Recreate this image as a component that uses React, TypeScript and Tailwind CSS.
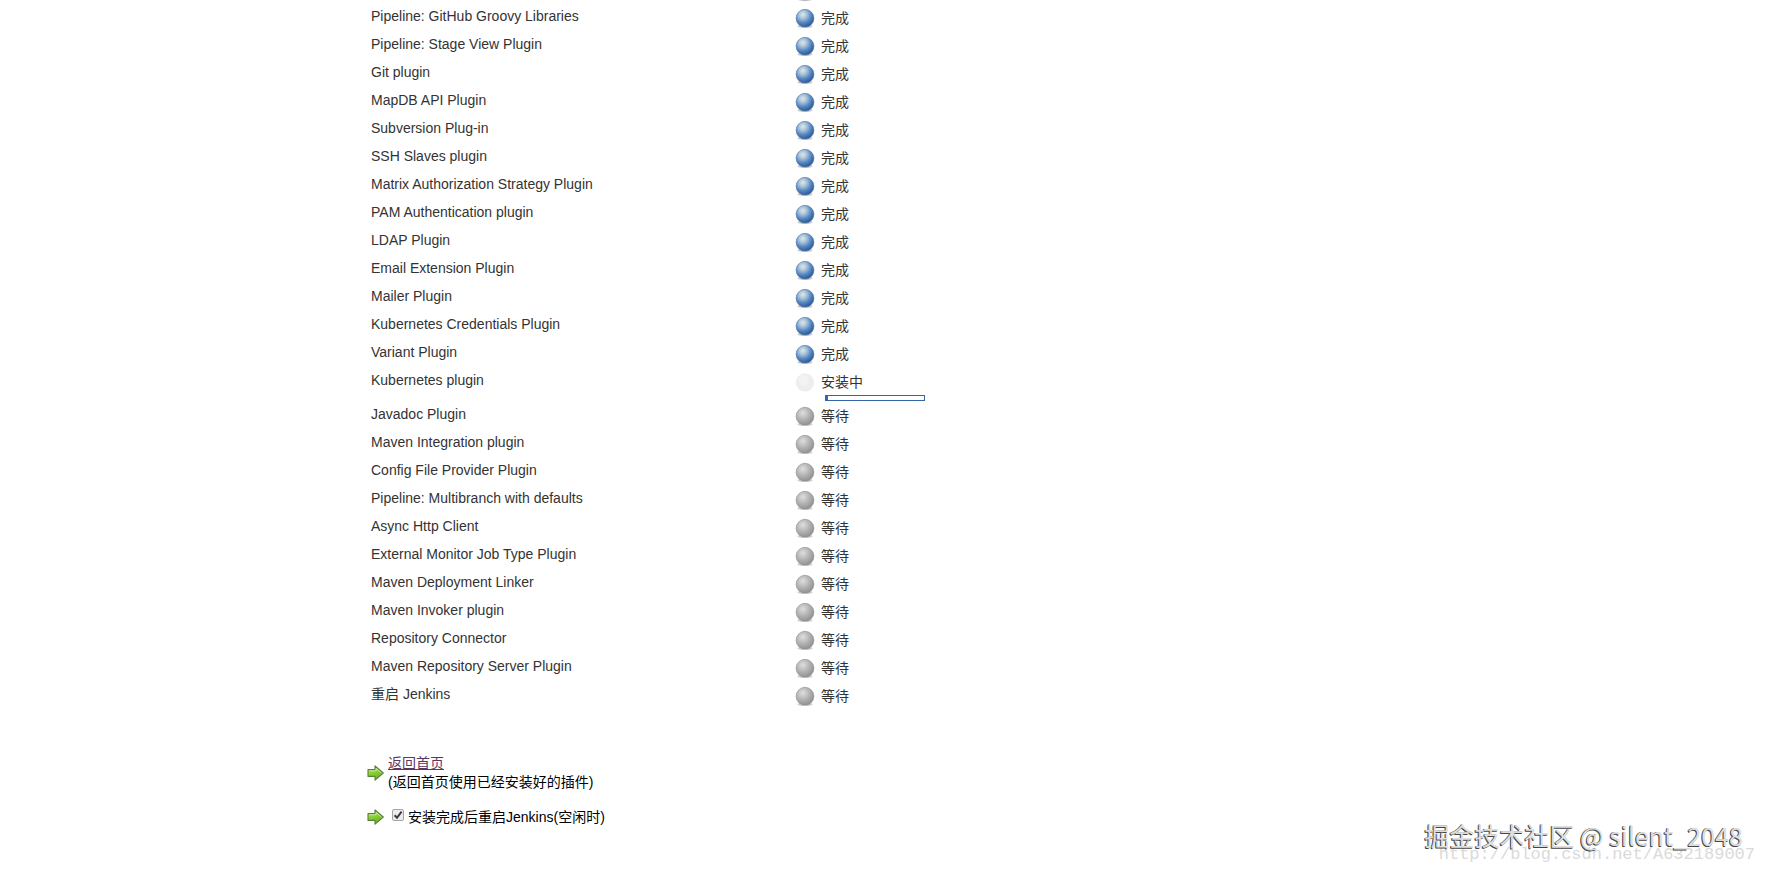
type State = "done" | "installing" | "pending";

const labels: Record<State, string> = {
  done: "完成",
  installing: "安装中",
  pending: "等待",
};

const plugins: [string, State][] = [
  ["Pipeline: GitHub Groovy Libraries", "done"],
  ["Pipeline: Stage View Plugin", "done"],
  ["Git plugin", "done"],
  ["MapDB API Plugin", "done"],
  ["Subversion Plug-in", "done"],
  ["SSH Slaves plugin", "done"],
  ["Matrix Authorization Strategy Plugin", "done"],
  ["PAM Authentication plugin", "done"],
  ["LDAP Plugin", "done"],
  ["Email Extension Plugin", "done"],
  ["Mailer Plugin", "done"],
  ["Kubernetes Credentials Plugin", "done"],
  ["Variant Plugin", "done"],
  ["Kubernetes plugin", "installing"],
  ["Javadoc Plugin", "pending"],
  ["Maven Integration plugin", "pending"],
  ["Config File Provider Plugin", "pending"],
  ["Pipeline: Multibranch with defaults", "pending"],
  ["Async Http Client", "pending"],
  ["External Monitor Job Type Plugin", "pending"],
  ["Maven Deployment Linker", "pending"],
  ["Maven Invoker plugin", "pending"],
  ["Repository Connector", "pending"],
  ["Maven Repository Server Plugin", "pending"],
  ["重启 Jenkins", "pending"],
];

function Gradients() {
  return (
    <svg width="0" height="0" className="absolute" aria-hidden="true">
      <defs>
        <radialGradient id="ball-done" cx="0.38" cy="0.3" r="0.72">
          <stop offset="0" stopColor="#dfe9e6" />
          <stop offset="0.3" stopColor="#a9c3da" />
          <stop offset="0.65" stopColor="#5386c0" />
          <stop offset="1" stopColor="#2a5695" />
        </radialGradient>
        <radialGradient id="ball-pending" cx="0.38" cy="0.32" r="0.72">
          <stop offset="0" stopColor="#dedede" />
          <stop offset="0.45" stopColor="#b9b9b9" />
          <stop offset="1" stopColor="#8e8e8e" />
        </radialGradient>
        <linearGradient id="arrow-fill" x1="0" y1="0" x2="0.4" y2="1">
          <stop offset="0" stopColor="#c0e88f" />
          <stop offset="0.5" stopColor="#8bd236" />
          <stop offset="1" stopColor="#69b518" />
        </linearGradient>
      </defs>
    </svg>
  );
}

function Ball({ state }: { state: State }) {
  if (state === "installing") {
    return (
      <svg width="20" height="20" viewBox="0 0 20 20" aria-hidden="true">
        <circle cx="10" cy="10.4" r="9.2" fill="#eeeeee" />
        <circle cx="8.5" cy="8.5" r="5" fill="#f3f3f3" />
      </svg>
    );
  }
  const done = state === "done";
  return (
    <svg width="20" height="20" viewBox="0 0 20 20" aria-hidden="true">
      <ellipse cx="10" cy="18.2" rx="7.5" ry="1.8" fill="#8a8a8a" opacity="0.45" />
      <circle
        cx="10"
        cy="10.2"
        r="8.9"
        fill={done ? "url(#ball-done)" : "url(#ball-pending)"}
        stroke={done ? "#4a6fa3" : "#8c8c8c"}
        strokeWidth="0.6"
      />
    </svg>
  );
}

function Arrow() {
  return (
    <svg width="17" height="16" viewBox="0 0 17 16" className="shrink-0" aria-hidden="true">
      <path
        d="M1 4.6H8V0.8L16.3 8L8 15.2V11.4H1Z"
        fill="url(#arrow-fill)"
        stroke="#5c7f3a"
        strokeWidth="1.1"
        strokeLinejoin="round"
      />
      <path d="M2.1 5.8H9.1V3.4L14.4 8" fill="none" stroke="#d0efaa" strokeWidth="0.8" />
    </svg>
  );
}

export default function App() {
  return (
    <div className="relative min-h-screen overflow-hidden bg-white font-['Liberation_Sans','Noto_Sans_CJK_SC',sans-serif] text-sm leading-5 text-black">
      <Gradients />
      <main className="pl-[367px]">
        <table className="border-collapse text-[#333333]">
          <tbody>
            <tr>
              <td />
              <td className="p-0 pl-1">
                <div className="flex h-[3px] items-end overflow-hidden pb-[2px]">
                  <div className="h-5">
                    <Ball state="pending" />
                  </div>
                </div>
              </td>
            </tr>
            {plugins.map(([name, state]) => (
              <tr key={name} className="h-7 align-top">
                <td className="w-[424px] py-[3px] pl-1">{name}</td>
                <td className="p-0 pt-[5px] pl-1">
                  <div className="flex items-center gap-[6px]">
                    <Ball state={state} />
                    <span>{labels[state]}</span>
                  </div>
                  {state === "installing" && (
                    <div
                      role="progressbar"
                      aria-label={name}
                      aria-valuenow={2}
                      className="mt-[3px] ml-[30px] h-[6px] w-[100px] border border-[#3465a4] bg-white"
                    >
                      <div className="h-full w-[2px] bg-[#3465a4]" />
                    </div>
                  )}
                </td>
              </tr>
            ))}
          </tbody>
        </table>

        <div className="mt-[45px] flex items-center gap-1">
          <Arrow />
          <div className="leading-[19px]">
            <a href="#" className="text-[#5c3566] underline">
              返回首页
            </a>
            <div>(返回首页使用已经安装好的插件)</div>
          </div>
        </div>

        <div className="mt-[15px] flex items-center">
          <Arrow />
          <label className="flex items-center">
            <span className="mr-1 mb-1 ml-2 grid size-3">
              <input
                type="checkbox"
                defaultChecked
                className="peer col-start-1 row-start-1 size-3 appearance-none rounded-xs border border-[#a6a6a6] bg-[#ececec]"
              />
              <svg
                viewBox="0 0 12 12"
                className="pointer-events-none invisible col-start-1 row-start-1 size-3 peer-checked:visible"
                aria-hidden="true"
              >
                <path d="M2.6 6.2L5 8.8L9.6 2.6" fill="none" stroke="#3c3c3c" strokeWidth="2" />
              </svg>
            </span>
            安装完成后重启Jenkins(空闲时)
          </label>
        </div>
      </main>

      <div className="pointer-events-none absolute right-3 bottom-[10px] font-['Liberation_Mono',monospace] text-[17px] leading-5 text-[#dadada]">
        http://blog.csdn.net/A632189007
      </div>
      <div className="pointer-events-none absolute right-6 bottom-6 font-['Noto_Sans_CJK_SC',sans-serif] text-[25px] leading-8 text-[#dedede] [text-shadow:-1px_0_0_#555555,-1px_1px_0_#444444]">
        掘金技术社区 @ silent_2048
      </div>
    </div>
  );
}
